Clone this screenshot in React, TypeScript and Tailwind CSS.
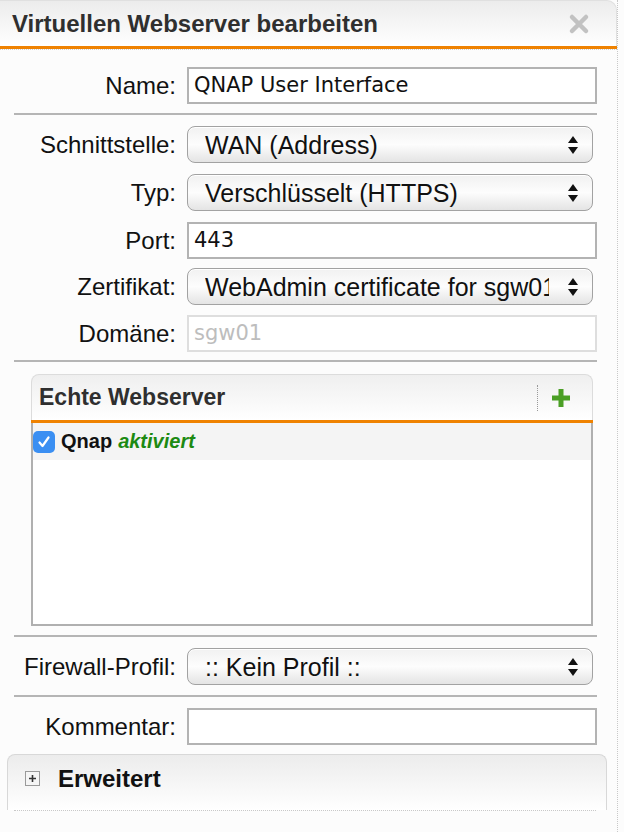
import React from 'react';

const labelCls = 'w-[176px] shrink-0 whitespace-nowrap text-right text-[24px] text-[#111] leading-[1.15]';

const Arrows = () => (
  <svg width="12" height="20" viewBox="0 0 12 20" className="shrink-0">
    <path d="M6 1 L11 8 L1 8 Z" fill="#111" />
    <path d="M1 12 L11 12 L6 19 Z" fill="#111" />
  </svg>
);

const Select: React.FC<{ value: string }> = ({ value }) => (
  <div className="ml-[11px] flex h-[37px] w-[406px] items-center rounded-[8px] border border-[#a2a2a2] bg-gradient-to-b from-[#f1f1f1] via-[#fdfdfd] to-[#e4e4e4] pl-[17px] pr-[13px] shadow-[inset_0_1px_0_#fff]">
    <span className="mr-[18px] flex-1 overflow-hidden whitespace-nowrap text-[25px] text-[#111] leading-[1.2]">{value}</span>
    <Arrows />
  </div>
);

const Input: React.FC<{ value: string; disabled?: boolean }> = ({ value, disabled }) => (
  <div className={`ml-[11px] flex h-[37px] w-[410px] items-center border-2 bg-white pl-[5px] ${disabled ? 'border-[#dedede]' : 'border-[#b3b3b3]'}`}>
    <span className={`font-['DejaVu_Sans',sans-serif] text-[21px] leading-[1.2] ${disabled ? 'text-[#bdbdbd]' : 'text-[#111]'}`}>{value}</span>
  </div>
);

const Row: React.FC<{ label: string; className?: string; children: React.ReactNode }> = ({ label, className, children }) => (
  <div className={`flex items-center ${className ?? ''}`}>
    <div className={labelCls}>{label}</div>
    {children}
  </div>
);

const Sep: React.FC<{ className?: string }> = ({ className }) => (
  <div className={`ml-[14px] h-[2px] w-[583px] bg-[#b5b5b5] ${className ?? ''}`} />
);

export default function App() {
  return (
    <div className="relative h-[832px] w-[624px] overflow-hidden bg-[#fcfcfc] font-['Liberation_Sans',Arial,sans-serif]">
      <div className="flex h-full w-[618px] flex-col border-r border-dotted border-[#c8c8c8]">
        {/* header */}
        <div className="flex h-[46px] items-center justify-between rounded-tr-[10px] border-t border-r border-[#e0e0e0] bg-gradient-to-b from-[#ececec] to-white pl-[12px] pr-[26px]">
          <h1 className="text-[24px] font-bold text-[#2f2f2f] leading-[1.15]">Virtuellen Webserver bearbeiten</h1>
          <svg width="22" height="22" viewBox="0 0 22 22">
            <path d="M4 4 L18 18 M18 4 L4 18" stroke="#c2c2c2" strokeWidth="4.5" strokeLinecap="round" />
          </svg>
        </div>
        <div className="h-[3px] bg-[#ef8200]" />
        <div className="h-[1px] border-b border-dotted border-[#cfcfcf]" />

        {/* form */}
        <div className="flex flex-col pt-[17px]">
          <Row label="Name:"><Input value="QNAP User Interface" /></Row>
          <Sep className="mt-[9px] mb-[11px]" />
          <Row label="Schnittstelle:"><Select value="WAN (Address)" /></Row>
          <Row label="Typ:" className="mt-[11px]"><Select value="Verschlüsselt (HTTPS)" /></Row>
          <Row label="Port:" className="mt-[11px]"><Input value="443" /></Row>
          <Row label="Zertifikat:" className="mt-[9px]"><Select value="WebAdmin certificate for sgw01" /></Row>
          <Row label="Domäne:" className="mt-[10px]"><Input value="sgw01" disabled /></Row>
          <Sep className="mt-[8px] mb-[12px]" />

          {/* Echte Webserver panel */}
          <div className="ml-[31px] flex h-[252px] w-[562px] flex-col">
            <div className="flex h-[46px] items-center justify-between rounded-t-[8px] border-t border-x border-[#dcdcdc] bg-gradient-to-b from-[#efefef] to-white pl-[7px] pr-[20px]">
              <span className="text-[23px] font-bold text-[#2f2f2f] leading-[1.15]">Echte Webserver</span>
              <div className="flex items-center gap-[12px]">
                <div className="h-[26px] border-l border-dotted border-[#9a9a9a]" />
                <svg width="22" height="22" viewBox="0 0 22 22">
                  <path d="M11 2 V20 M2 11 H20" stroke="#4b9f25" strokeWidth="5" />
                </svg>
              </div>
            </div>
            <div className="h-[3px] bg-[#ef8200]" />
            <div className="flex-1 border-x-2 border-b-2 border-[#b0b0b0] bg-white">
              <div className="flex h-[37px] items-center gap-[6px] bg-[#f4f4f4]">
                <div className="flex h-[22px] w-[22px] items-center justify-center rounded-[5px] bg-[#3b8ff2]">
                  <svg width="14" height="14" viewBox="0 0 14 14">
                    <path d="M2.5 7.5 L5.5 11 L11.5 2.5" stroke="#fff" strokeWidth="2.2" fill="none" strokeLinecap="round" strokeLinejoin="round" />
                  </svg>
                </div>
                <span className="text-[20px] font-bold text-[#111] leading-[1.15]">Qnap</span>
                <span className="text-[20px] font-bold italic text-[#1c8a12] leading-[1.15]">aktiviert</span>
              </div>
            </div>
          </div>

          <Sep className="mt-[9px] mb-[11px]" />
          <Row label="Firewall-Profil:"><Select value=":: Kein Profil ::" /></Row>
          <Sep className="mt-[10px] mb-[11px]" />
          <Row label="Kommentar:"><Input value="" /></Row>

          {/* Erweitert */}
          <div className="mt-[9px] ml-[7px] flex h-[56px] w-[600px] flex-col rounded-t-[8px] border-t border-x border-[#d8d8d8] bg-gradient-to-b from-[#ececec] to-white">
            <div className="flex items-center gap-[18px] pl-[17px] pt-[10px]">
              <div className="flex h-[15px] w-[15px] items-center justify-center border border-[#9a9a9a] bg-[#f5f5f5]">
                <svg width="9" height="9" viewBox="0 0 9 9">
                  <path d="M4.5 1 V8 M1 4.5 H8" stroke="#333" strokeWidth="1.6" />
                </svg>
              </div>
              <span className="text-[24px] font-bold text-[#111] leading-[1.15]">Erweitert</span>
            </div>
          </div>
          <div className="ml-[14px] w-[582px] border-b border-dotted border-[#c8c8c8]" />
        </div>
      </div>
    </div>
  );
}
